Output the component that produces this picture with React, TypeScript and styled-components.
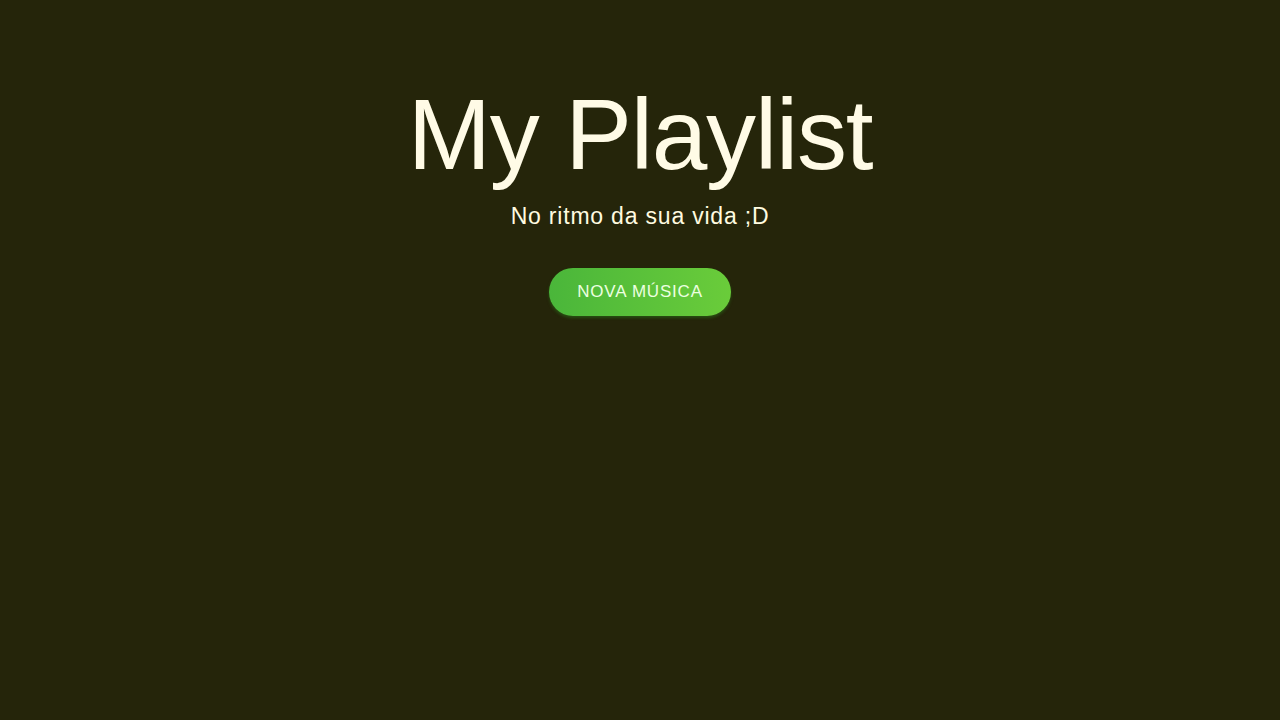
import styled, { createGlobalStyle } from "styled-components";

const GlobalStyle = createGlobalStyle`
  html, body {
    margin: 0;
    padding: 0;
    background: #25250a;
  }
  body {
    font-family: "Liberation Sans", Arial, sans-serif;
  }
`;

const Page = styled.main`
  min-height: 720px;
  background: #25250a;
  display: flex;
  flex-direction: column;
  align-items: center;
  padding-top: 77px;
  box-sizing: border-box;
`;

const Title = styled.h1`
  margin: 0;
  font-size: 100px;
  font-weight: 300;
  line-height: 115px;
  color: #fffbe6;
  letter-spacing: -1.2px;
`;

const Subtitle = styled.p`
  margin: 11px 0 0;
  font-size: 23px;
  line-height: 26px;
  letter-spacing: 0.8px;
  color: #fffbe0;
`;

const AddButton = styled.button`
  margin-top: 39px;
  width: 182px;
  height: 48px;
  border: none;
  border-radius: 24px;
  background: linear-gradient(90deg, #4ab63a, #6acc3a);
  box-shadow: 0 2px 3px rgba(40, 90, 20, 0.8);
  color: #ecffe0;
  font-family: "Liberation Sans", Arial, sans-serif;
  font-size: 17px;
  letter-spacing: 0.8px;
  text-transform: uppercase;
  cursor: pointer;
`;

export default function App() {
  return (
    <>
      <GlobalStyle />
      <Page>
        <Title>My Playlist</Title>
        <Subtitle>No ritmo da sua vida ;D</Subtitle>
        <AddButton>Nova música</AddButton>
      </Page>
    </>
  );
}
